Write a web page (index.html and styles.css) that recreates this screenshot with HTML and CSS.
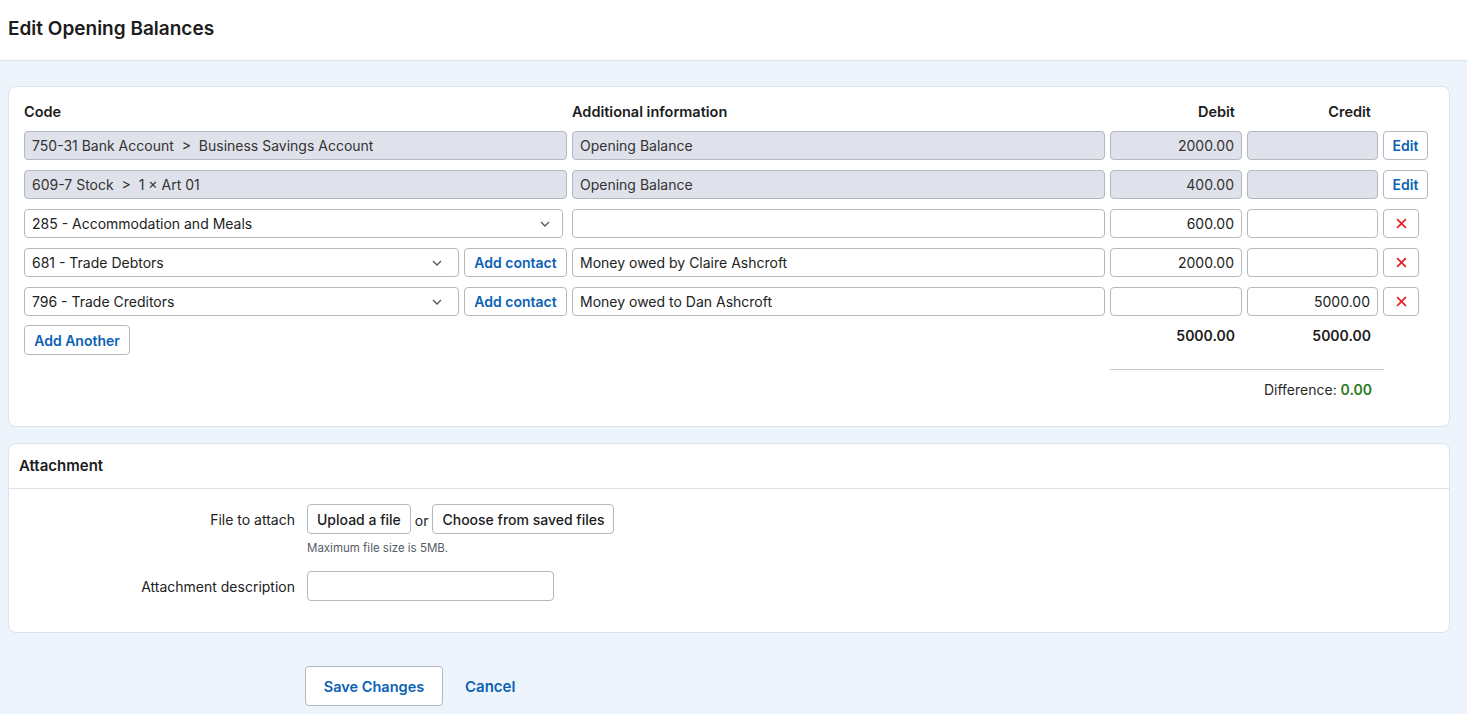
FILE: index.html
```html
<!DOCTYPE html>
<html lang="en">
<head>
<meta charset="utf-8">
<title>Edit Opening Balances</title>
<link rel="stylesheet" href="styles.css">
</head>
<body>
<header class="topbar">
  <h1 class="title">Edit Opening Balances</h1>
</header>

<main class="page">
  <section class="card balances">
    <div class="grid">
      <div class="th">Code</div>
      <div class="th">Additional information</div>
      <div class="th num">Debit</div>
      <div class="th num">Credit</div>
      <div></div>

      <div class="field locked">750-31 Bank Account&nbsp; &gt; &nbsp;Business Savings Account</div>
      <div class="field locked">Opening Balance</div>
      <div class="field locked num">2000.00</div>
      <div class="field locked num"></div>
      <button class="btn btn-edit">Edit</button>

      <div class="field locked">609-7 Stock&nbsp; &gt; &nbsp;1 × Art 01</div>
      <div class="field locked">Opening Balance</div>
      <div class="field locked num">400.00</div>
      <div class="field locked num"></div>
      <button class="btn btn-edit">Edit</button>

      <div class="field select wide">285 - Accommodation and Meals<svg class="chev" viewBox="0 0 10 6"><path d="M1 1l4 4 4-4"/></svg></div>
      <div class="field"></div>
      <div class="field num">600.00</div>
      <div class="field num"></div>
      <button class="btn btn-del" aria-label="Remove"><svg viewBox="0 0 10 10"><path d="M1 1l8 8M9 1l-8 8"/></svg></button>

      <div class="code-pair">
        <div class="field select">681 - Trade Debtors<svg class="chev" viewBox="0 0 10 6"><path d="M1 1l4 4 4-4"/></svg></div>
        <button class="btn btn-contact">Add contact</button>
      </div>
      <div class="field">Money owed by Claire Ashcroft</div>
      <div class="field num">2000.00</div>
      <div class="field num"></div>
      <button class="btn btn-del" aria-label="Remove"><svg viewBox="0 0 10 10"><path d="M1 1l8 8M9 1l-8 8"/></svg></button>

      <div class="code-pair">
        <div class="field select">796 - Trade Creditors<svg class="chev" viewBox="0 0 10 6"><path d="M1 1l4 4 4-4"/></svg></div>
        <button class="btn btn-contact">Add contact</button>
      </div>
      <div class="field">Money owed to Dan Ashcroft</div>
      <div class="field num"></div>
      <div class="field num">5000.00</div>
      <button class="btn btn-del" aria-label="Remove"><svg viewBox="0 0 10 10"><path d="M1 1l8 8M9 1l-8 8"/></svg></button>

      <div class="add-cell"><button class="btn btn-add">Add Another</button></div>
      <div></div>
      <div class="total num">5000.00</div>
      <div class="total num">5000.00</div>
      <div></div>
    </div>

    <div class="summary">
      <div class="summary-line"></div>
      <div class="difference">Difference: <span class="ok">0.00</span></div>
    </div>
  </section>

  <section class="card attachment">
    <h2 class="card-head">Attachment</h2>
    <div class="form">
      <div class="form-row">
        <label class="label">File to attach</label>
        <div class="control">
          <div class="file-choice">
            <button class="btn btn-plain">Upload a file</button>
            <span class="or">or</span>
            <button class="btn btn-plain">Choose from saved files</button>
          </div>
          <p class="hint">Maximum file size is 5MB.</p>
        </div>
      </div>
      <div class="form-row desc-row">
        <label class="label">Attachment description</label>
        <div class="control"><div class="field desc-input"></div></div>
      </div>
    </div>
  </section>

  <div class="actions">
    <button class="btn btn-save">Save Changes</button>
    <a class="cancel" href="#">Cancel</a>
  </div>
</main>
</body>
</html>
```

FILE: styles.css
```css
* { box-sizing: border-box; }

html, body {
  margin: 0;
  padding: 0;
}

body {
  font-family: Inter, "Noto Sans", sans-serif;
  font-size: 14px;
  color: #222;
  background: #eef4fc;
  height: 714px;
  overflow: hidden;
}

.topbar {
  background: #fff;
  height: 61px;
  border-bottom: 1px solid #dde3ea;
  display: flex;
  align-items: center;
  padding: 0 8px;
}

.title {
  margin: 0 0 3px;
  font-size: 19px;
  font-weight: 600;
  color: #1c1c1c;
}

.page {
  padding: 25px 17px 0 8px;
}

.card {
  background: #fff;
  border: 1px solid #dde3ec;
  border-radius: 8px;
}

.balances {
  padding: 15px 21px 28px 15px;
}

.grid {
  display: grid;
  grid-template-columns: 543px 533px 132px 131px 44px;
  column-gap: 5px;
  row-gap: 10px;
  align-items: center;
}

.th {
  font-weight: 600;
  font-size: 14.5px;
  color: #1c1c1c;
  height: 20px;
  line-height: 20px;
  margin-bottom: -1px;
}

.num { text-align: right; }
.th.num { padding-right: 7px; }

.field {
  height: 29px;
  border: 1px solid #b3b9c1;
  border-radius: 4px;
  background: #fff;
  padding: 0 7px;
  line-height: 27px;
  white-space: nowrap;
  overflow: hidden;
  color: #222;
}

.field.locked {
  background: #dfe2ea;
  color: #333;
}

.field.select {
  display: flex;
  align-items: center;
  justify-content: space-between;
  padding-right: 16px;
}

.field.select.wide {
  margin-right: 4px;
  padding-right: 12px;
}

.chev {
  width: 10px;
  height: 6px;
  fill: none;
  stroke: #555;
  stroke-width: 1.3;
}

.code-pair {
  display: flex;
  gap: 5px;
}
.code-pair .field { flex: 1; }

.btn {
  font-family: inherit;
  font-size: 14px;
  background: #fff;
  border: 1px solid #b3b9c1;
  border-radius: 4px;
  color: #0b62b5;
  font-weight: 600;
  height: 29px;
  padding: 0 8px;
  cursor: pointer;
}

.btn-edit {
  width: 45px;
  padding: 0;
}

.btn-del {
  width: 36px;
  padding: 0;
  display: flex;
  align-items: center;
  justify-content: center;
}
.btn-del svg {
  width: 11px;
  height: 11px;
  fill: none;
  stroke: #e3262b;
  stroke-width: 1.6;
}

.btn-contact {
  width: 103px;
  padding: 0;
}

.add-cell {
  align-self: start;
  margin-top: -1px;
}

.btn-add {
  display: block;
  height: 30px;
  width: 106px;
  padding: 0;
}

.total {
  font-weight: 600;
  color: #1c1c1c;
  padding-right: 7px;
  align-self: start;
  line-height: 19px;
}

.summary {
  margin-left: 1086px;
  width: 274px;
  margin-top: 14px;
}

.summary-line {
  border-top: 1px solid #c4c9cf;
}

.difference {
  text-align: right;
  padding-right: 12px;
  margin-top: 11px;
  color: #2a2a2a;
}

.ok {
  color: #2b7a1c;
  font-weight: 600;
}

.attachment {
  margin-top: 16px;
  height: 190px;
}

.card-head {
  margin: 0;
  font-size: 15px;
  font-weight: 600;
  color: #1c1c1c;
  padding: 0 10px;
  height: 45px;
  line-height: 44px;
  border-bottom: 1px solid #dde3ec;
}

.form {
  padding-top: 15px;
}

.form-row {
  display: flex;
  gap: 12px;
}

.label {
  width: 286px;
  text-align: right;
  line-height: 31px;
  color: #222;
}

.file-choice {
  display: flex;
  align-items: center;
  gap: 4px;
}

.btn-plain {
  color: #1c1c1c;
  height: 30px;
  padding: 0 9px;
  font-weight: 500;
}

.or {
  color: #222;
  margin-top: 3px;
}

.hint {
  margin: 7px 0 0;
  font-size: 11.5px;
  color: #555c66;
}

.desc-row { margin-top: 16px; }

.desc-input {
  width: 247px;
  height: 30px;
}

.actions {
  display: flex;
  align-items: center;
  gap: 22px;
  margin-top: 33px;
  padding-left: 297px;
}

.btn-save {
  height: 40px;
  width: 138px;
  font-size: 14.5px;
  padding: 0;
}

.cancel {
  color: #0b62b5;
  font-weight: 600;
  font-size: 15px;
  text-decoration: none;
}
```
